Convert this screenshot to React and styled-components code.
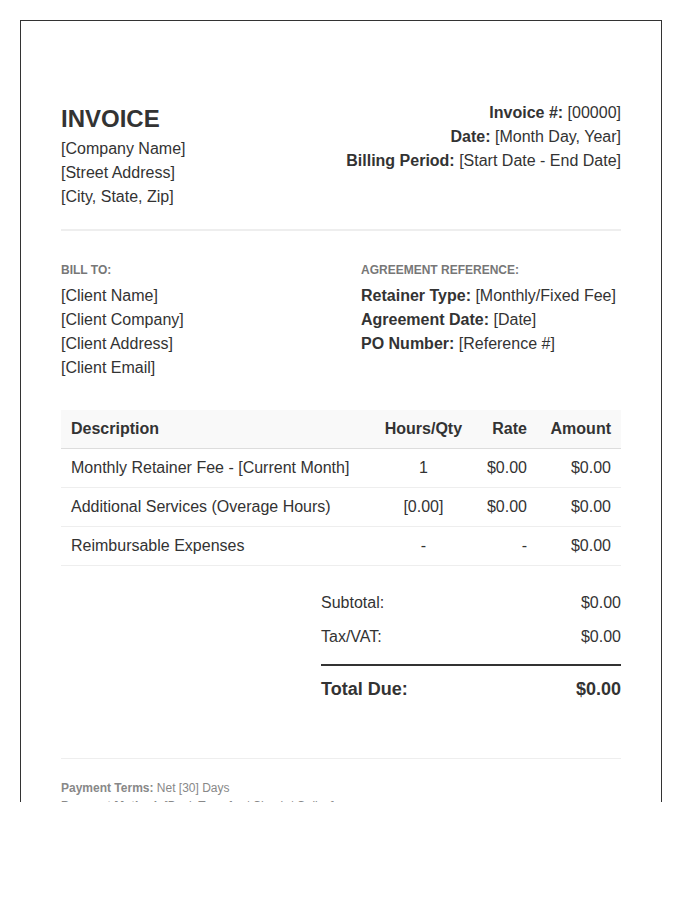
import React from "react";
import styled, { createGlobalStyle } from "styled-components";

const GlobalStyle = createGlobalStyle`
  body {
    margin: 0;
    background: #fff;
    font-family: "Liberation Sans", Arial, sans-serif;
    color: #333;
  }
`;

const Sheet = styled.div`
  box-sizing: border-box;
  width: 642px;
  height: 782px;
  margin: 20px 0 0 20px;
  padding: 80px 40px 0;
  border: 1px solid #333;
  border-bottom: none;
  overflow: hidden;
  font-size: 16px;
  line-height: 24px;
`;

const Header = styled.header`
  display: flex;
  justify-content: space-between;
  padding-bottom: 20px;
  border-bottom: 2px solid #eee;
  margin-bottom: 30px;
`;

const Title = styled.h1`
  margin: 0;
  font-size: 24px;
  line-height: 36px;
  font-weight: bold;
`;

const Meta = styled.div`
  text-align: right;
`;

const Parties = styled.section`
  display: grid;
  grid-template-columns: 300px 1fr;
  margin-bottom: 30px;
`;

const Label = styled.h2`
  margin: 0 0 5px;
  font-size: 12px;
  line-height: 18px;
  font-weight: bold;
  color: #777;
  text-transform: uppercase;
`;

const Table = styled.table`
  width: 100%;
  border-collapse: collapse;
  margin-bottom: 20px;
  line-height: 18px;
`;

const Th = styled.th`
  padding: 10px;
  background: #f9f9f9;
  border-bottom: 1px solid #ddd;
  font-weight: bold;
  text-align: ${({ $align }) => $align || "left"};
`;

const Td = styled.td`
  padding: 10px;
  border-bottom: 1px solid #eee;
  white-space: nowrap;
  text-align: ${({ $align }) => $align || "left"};
`;

const Totals = styled.section`
  width: 300px;
  margin-left: auto;
`;

const TotalRow = styled.div`
  display: flex;
  justify-content: space-between;
  padding: 5px 0;
`;

const GrandTotal = styled.div`
  display: flex;
  justify-content: space-between;
  margin-top: 10px;
  padding-top: 10px;
  border-top: 2px solid #333;
  font-size: 18px;
  line-height: 27px;
  font-weight: bold;
`;

const Footer = styled.footer`
  margin-top: 55px;
  padding-top: 20px;
  border-top: 1px solid #eee;
  font-size: 12px;
  line-height: 18px;
  color: #888;
`;

const rows = [
  ["Monthly Retainer Fee - [Current Month]", "1", "$0.00", "$0.00"],
  ["Additional Services (Overage Hours)", "[0.00]", "$0.00", "$0.00"],
  ["Reimbursable Expenses", "-", "-", "$0.00"],
];

export default function App() {
  return (
    <>
      <GlobalStyle />
      <Sheet>
        <Header>
          <div>
            <Title>INVOICE</Title>
            <div>[Company Name]</div>
            <div>[Street Address]</div>
            <div>[City, State, Zip]</div>
          </div>
          <Meta>
            <div><strong>Invoice #:</strong> [00000]</div>
            <div><strong>Date:</strong> [Month Day, Year]</div>
            <div><strong>Billing Period:</strong> [Start Date - End Date]</div>
          </Meta>
        </Header>
        <Parties>
          <div>
            <Label>Bill To:</Label>
            <div>[Client Name]</div>
            <div>[Client Company]</div>
            <div>[Client Address]</div>
            <div>[Client Email]</div>
          </div>
          <div>
            <Label>Agreement Reference:</Label>
            <div><strong>Retainer Type:</strong> [Monthly/Fixed Fee]</div>
            <div><strong>Agreement Date:</strong> [Date]</div>
            <div><strong>PO Number:</strong> [Reference #]</div>
          </div>
        </Parties>
        <Table>
          <thead>
            <tr>
              <Th>Description</Th>
              <Th $align="center">Hours/Qty</Th>
              <Th $align="right">Rate</Th>
              <Th $align="right">Amount</Th>
            </tr>
          </thead>
          <tbody>
            {rows.map((r) => (
              <tr key={r[0]}>
                <Td>{r[0]}</Td>
                <Td $align="center">{r[1]}</Td>
                <Td $align="right">{r[2]}</Td>
                <Td $align="right">{r[3]}</Td>
              </tr>
            ))}
          </tbody>
        </Table>
        <Totals>
          <TotalRow><span>Subtotal:</span><span>$0.00</span></TotalRow>
          <TotalRow><span>Tax/VAT:</span><span>$0.00</span></TotalRow>
          <GrandTotal><span>Total Due:</span><span>$0.00</span></GrandTotal>
        </Totals>
        <Footer>
          <div><strong>Payment Terms:</strong> Net [30] Days</div>
          <div><strong>Payment Method:</strong> [Bank Transfer / Check / Online]</div>
        </Footer>
      </Sheet>
    </>
  );
}
